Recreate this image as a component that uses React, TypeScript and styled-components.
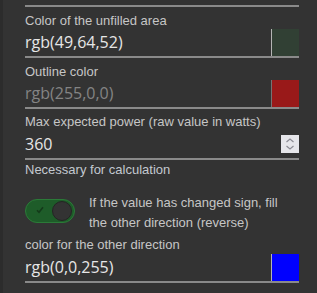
import React, { useState } from "react";
import styled, { createGlobalStyle } from "styled-components";

const GlobalStyle = createGlobalStyle`
  html, body {
    margin: 0;
    padding: 0;
    background: #333333;
  }
  body {
    font-family: "Liberation Sans", Arial, sans-serif;
  }
`;

const Panel = styled.div`
  box-sizing: border-box;
  width: 317px;
  height: 293px;
  border-left: 3px solid #2c2c2c;
  padding: 5px 18px 0 22px;
  overflow: hidden;
  display: flex;
  flex-direction: column;
`;

const Divider = styled.div`
  height: 2px;
  background: #8a8a8a;
`;

const Field = styled.div<{ $gap: number }>`
  display: flex;
  flex-direction: column;
  margin-top: ${({ $gap }) => $gap}px;
`;

const Label = styled.div`
  font-size: 13px;
  line-height: 15px;
  color: #c6c6c6;
  white-space: nowrap;
`;

const InputRow = styled.div<{ $height: number }>`
  display: flex;
  align-items: center;
  height: ${({ $height }) => $height}px;
  border-bottom: 2px solid #8a8a8a;
`;

const ValueInput = styled.input`
  flex: 1;
  min-width: 0;
  background: transparent;
  border: none;
  outline: none;
  padding: 0;
  margin: 0;
  font-family: "Open Sans", "Noto Sans", sans-serif;
  font-size: 16px;
  line-height: 20px;
  color: #e6e6e6;

  &:disabled {
    color: #848484;
  }
`;

const Swatch = styled.div<{ $color: string; $dim?: boolean }>`
  align-self: flex-end;
  width: 27px;
  height: 27px;
  border-left: 1px solid #b4b4b4;
  background: ${({ $color }) => $color};
  opacity: ${({ $dim }) => ($dim ? 0.5 : 1)};
`;

const Spinner = styled.div`
  width: 18px;
  height: 18px;
  background: #e6e6ea;
  display: flex;
  align-items: center;
  justify-content: center;
`;

const Helper = styled.div`
  margin-top: 2px;
  font-size: 13px;
  line-height: 15px;
  color: #c3c9d0;
`;

const ToggleRow = styled.div`
  display: flex;
  align-items: flex-start;
  gap: 14px;
  margin-top: 16px;
`;

const Track = styled.button<{ $on: boolean }>`
  position: relative;
  box-sizing: border-box;
  flex: none;
  width: 50px;
  height: 24px;
  margin-top: 6px;
  padding: 0;
  border-radius: 12px;
  border: 1px solid ${({ $on }) => ($on ? "#2b7a38" : "#666")};
  background: ${({ $on }) => ($on ? "#1e5c29" : "#555")};
  cursor: pointer;
`;

const Knob = styled.span<{ $on: boolean }>`
  position: absolute;
  top: 1px;
  left: ${({ $on }) => ($on ? "26px" : "2px")};
  box-sizing: border-box;
  width: 20px;
  height: 20px;
  border-radius: 50%;
  background: #333333;
  border: 1px solid #242424;
`;

const Check = styled.svg`
  position: absolute;
  left: 10px;
  top: 6px;
`;

const ToggleText = styled.div`
  max-width: 200px;
  font-size: 13px;
  line-height: 20px;
  color: #c6c6c6;
`;

const App = () => {
  const [reverse, setReverse] = useState(true);

  return (
    <Panel>
      <GlobalStyle />
      <Divider />

      <Field $gap={6}>
        <Label>Color of the unfilled area</Label>
        <InputRow $height={28}>
          <ValueInput readOnly value="rgb(49,64,52)" />
          <Swatch $color="rgb(49,64,52)" />
        </InputRow>
      </Field>

      <Field $gap={6}>
        <Label>Outline color</Label>
        <InputRow $height={28}>
          <ValueInput disabled value="rgb(255,0,0)" />
          <Swatch $color="rgb(255,0,0)" $dim />
        </InputRow>
      </Field>

      <Field $gap={5}>
        <Label>Max expected power (raw value in watts)</Label>
        <InputRow $height={29}>
          <ValueInput readOnly value="360" />
          <Spinner>
            <svg width="10" height="14" viewBox="0 0 10 14">
              <path d="M1.5 5 L5 2 L8.5 5" fill="none" stroke="#8c8c94" strokeWidth="1.2" />
              <path d="M1.5 9 L5 12 L8.5 9" fill="none" stroke="#8c8c94" strokeWidth="1.2" />
            </svg>
          </Spinner>
        </InputRow>
      </Field>
      <Helper>Necessary for calculation</Helper>

      <ToggleRow>
        <Track $on={reverse} onClick={() => setReverse(!reverse)}>
          {reverse && (
            <Check width="8" height="8" viewBox="0 0 8 8">
              <path d="M1 4.2 L3 6.3 L7 1.2" fill="none" stroke="#143a1a" strokeWidth="1.6" />
            </Check>
          )}
          <Knob $on={reverse} />
        </Track>
        <ToggleText>If the value has changed sign, fill the other direction (reverse)</ToggleText>
      </ToggleRow>

      <Field $gap={4}>
        <Label>color for the other direction</Label>
        <InputRow $height={29}>
          <ValueInput readOnly value="rgb(0,0,255)" />
          <Swatch $color="rgb(0,0,255)" />
        </InputRow>
      </Field>
    </Panel>
  );
};

export default App;
